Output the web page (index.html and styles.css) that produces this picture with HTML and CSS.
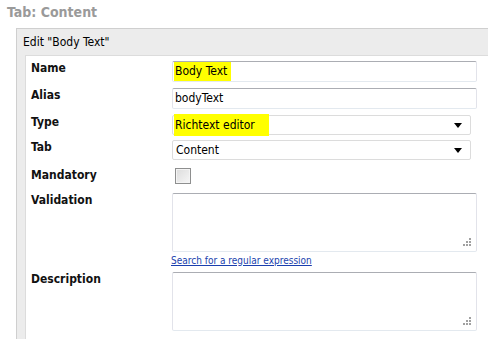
FILE: index.html
```html
<!DOCTYPE html>
<html>
<head>
<meta charset="utf-8">
<link rel="stylesheet" href="styles.css">
</head>
<body>
<h2 class="tab-title">Tab: Content</h2>
<div class="panel">
  <div class="panel-head">Edit "Body Text"</div>
  <div class="panel-body">
    <div class="row row-name">
      <div class="label">Name</div>
      <div class="field input"><span class="hl hl-name">Body Text</span></div>
    </div>
    <div class="row row-alias">
      <div class="label">Alias</div>
      <div class="field input">bodyText</div>
    </div>
    <div class="row row-type">
      <div class="label">Type</div>
      <div class="field select"><span class="hl hl-type">Richtext editor</span><span class="arrow"></span></div>
    </div>
    <div class="row row-tab">
      <div class="label">Tab</div>
      <div class="field select"><span>Content</span><span class="arrow"></span></div>
    </div>
    <div class="row row-mand">
      <div class="label">Mandatory</div>
      <div class="checkbox"></div>
    </div>
    <div class="row row-valid">
      <div class="label">Validation</div>
      <div class="control">
        <div class="field textarea"><svg class="grip" width="9" height="9" viewBox="0 0 9 9"><g fill="#a0a0a0"><rect x="7" y="1" width="2" height="2"/><rect x="4" y="4" width="2" height="2"/><rect x="7" y="4" width="2" height="2"/><rect x="1" y="7" width="2" height="2"/><rect x="4" y="7" width="2" height="2"/><rect x="7" y="7" width="2" height="2"/></g></svg></div>
        <a class="link" href="#">Search for a regular expression</a>
      </div>
    </div>
    <div class="row row-desc">
      <div class="label">Description</div>
      <div class="field textarea"><svg class="grip" width="9" height="9" viewBox="0 0 9 9"><g fill="#a0a0a0"><rect x="7" y="1" width="2" height="2"/><rect x="4" y="4" width="2" height="2"/><rect x="7" y="4" width="2" height="2"/><rect x="1" y="7" width="2" height="2"/><rect x="4" y="7" width="2" height="2"/><rect x="7" y="7" width="2" height="2"/></g></svg></div>
    </div>
  </div>
</div>
</body>
</html>
```
FILE: styles.css
```css
html, body {
  margin: 0;
  padding: 0;
  background: #fff;
}
body {
  font-family: "DejaVu Sans Condensed", "DejaVu Sans", sans-serif;
  font-stretch: condensed;
  font-size: 11px;
  color: #000;
  overflow: hidden;
  height: 339px;
  display: flex;
  flex-direction: column;
}
.tab-title {
  flex: none;
  margin: 0;
  padding: 3px 0 0 7px;
  height: 25px;
  font-size: 14px;
  line-height: 18px;
  font-weight: bold;
  color: #9a9a9a;
}
.panel {
  flex: 1;
  min-height: 0;
  display: flex;
  flex-direction: column;
  margin-left: 16px;
  border-left: 1px solid #cfcfcf;
  border-top: 1px solid #cfcfcf;
  background: #ececec;
}
.panel-head {
  flex: none;
  height: 26px;
  line-height: 27px;
  padding-left: 6px;
  font-size: 12px;
  color: #000;
}
.panel-body {
  flex: 1;
  min-height: 0;
  margin-left: 8px;
  background: #fff;
  border-top: 1px solid #dcdcdc;
  border-left: 1px solid #dcdcdc;
  padding-top: 5px;
  padding-left: 5px;
}
.row {
  display: flex;
  align-items: flex-start;
}
.label {
  width: 141px;
  flex: none;
  font-weight: bold;
  font-size: 12px;
  line-height: 15px;
  color: #111;
}
.field {
  box-sizing: border-box;
  border: 1px solid #e2e3ea;
  border-top-color: #abadb3;
  border-bottom-color: #e3e9ef;
  border-radius: 2px;
  background: #fff;
  position: relative;
}
.input {
  width: 305px;
  height: 21px;
  line-height: 19px;
  padding-left: 2px;
  font-size: 12px;
}
.select {
  width: 299px;
  height: 20px;
  line-height: 18px;
  padding-left: 3px;
  font-size: 12px;
  border-color: #dcdcdc;
  display: flex;
  align-items: center;
}
.arrow {
  margin-left: auto;
  margin-right: 8px;
  width: 0;
  height: 0;
  border-left: 4px solid transparent;
  border-right: 4px solid transparent;
  border-top: 5px solid #000;
}
.hl {
  background: #ffff00;
  display: inline-block;
}
.hl-name {
  padding: 0 4px 0 1px;
  margin-left: -1px;
  line-height: 19px;
}
.hl-type {
  padding: 3px 14px 3px 1px;
  margin-left: -2px;
  line-height: 16px;
}
.row-alias { margin-top: 6px; }
.row-type { margin-top: 6px; }
.row-tab { margin-top: 5px; }
.row-mand { margin-top: 8px; }
.row-valid { margin-top: 9px; }
.row-desc { margin-top: 3px; }
.checkbox {
  box-sizing: border-box;
  margin-left: 3px;
  width: 16px;
  height: 16px;
  border: 1px solid #8e8f8f;
  background: linear-gradient(135deg, #dcdcdc, #f6f6f6);
  box-shadow: inset 0 0 0 1px #f4f4f4;
}
.control {
  display: flex;
  flex-direction: column;
}
.textarea {
  width: 305px;
  height: 59px;
}
.grip {
  position: absolute;
  right: 5px;
  bottom: 5px;
}
.link {
  font-size: 10px;
  line-height: 17px;
  color: #1a3fae;
  text-decoration: underline;
  margin-left: -1px;
}
```
